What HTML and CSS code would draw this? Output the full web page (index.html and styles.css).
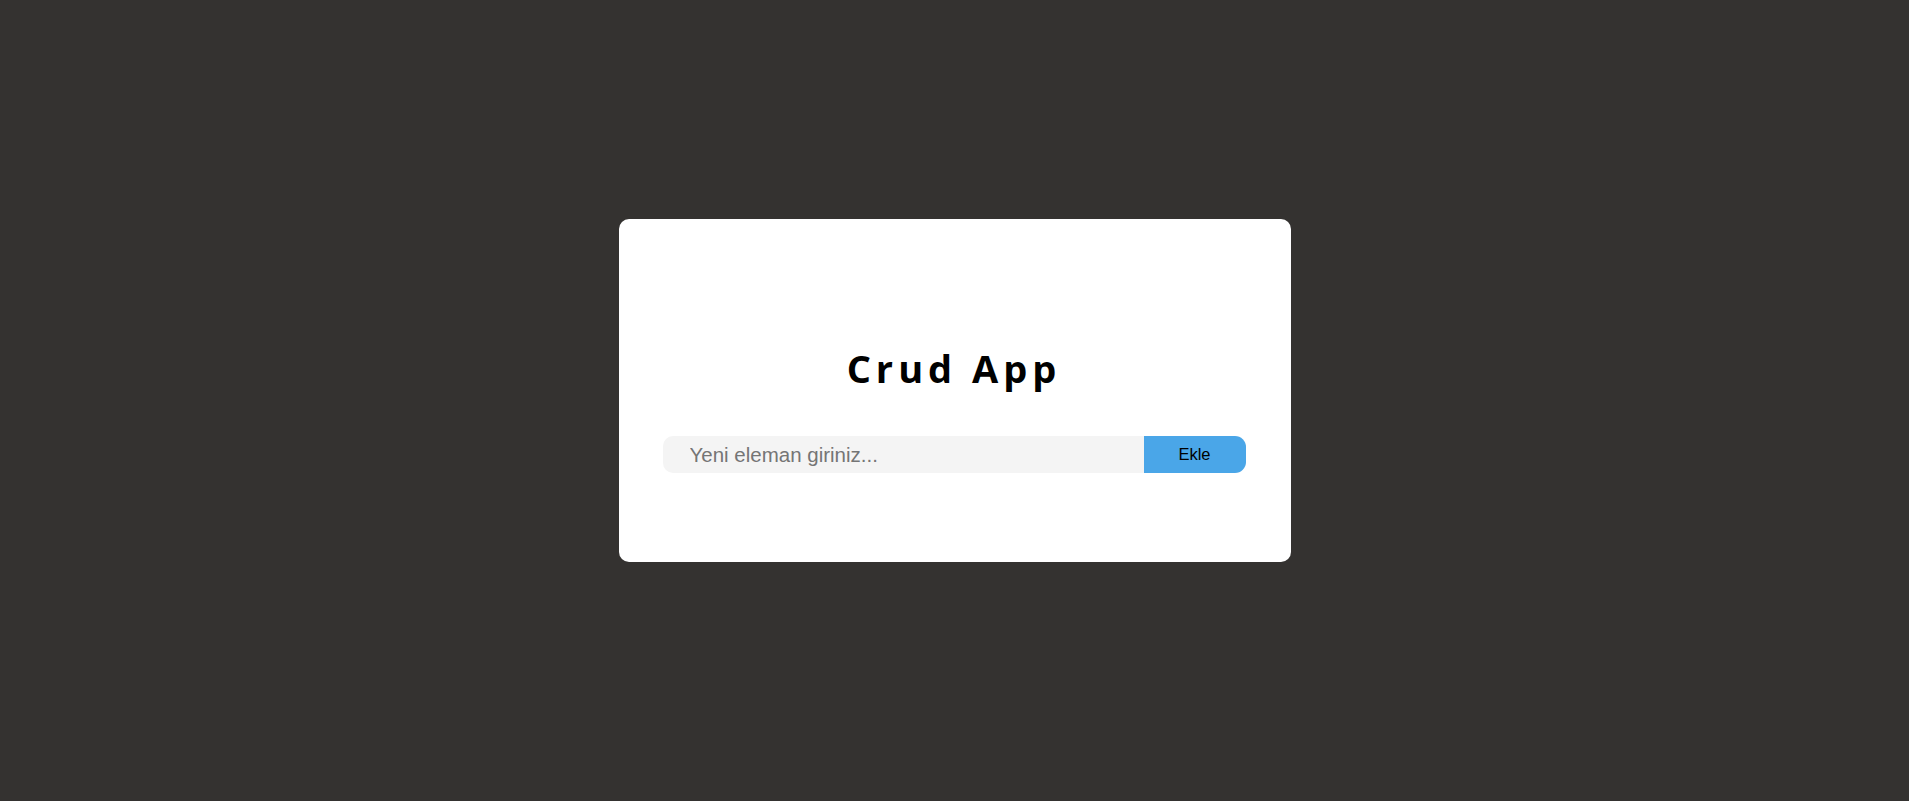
FILE: index.html
```html
<!DOCTYPE html>
<html lang="tr">
<head>
<meta charset="utf-8">
<title>Crud App</title>
<link rel="stylesheet" href="styles.css">
</head>
<body>
<main class="card">
  <h1 class="title">Crud App</h1>
  <form class="add-form">
    <input class="add-input" type="text" placeholder="Yeni eleman giriniz...">
    <button class="add-btn" type="button">Ekle</button>
  </form>
</main>
</body>
</html>
```
FILE: styles.css
```css
html, body {
  margin: 0;
  padding: 0;
}
body {
  background: #343230;
  min-height: 100vh;
  display: flex;
  justify-content: center;
  align-items: flex-start;
  font-family: "Liberation Sans", Arial, sans-serif;
}
.card {
  box-sizing: border-box;
  width: 672px;
  height: 343px;
  margin-top: 219px;
  background: #ffffff;
  border-radius: 10px;
  padding: 123px 45px 0 44px;
  display: flex;
  flex-direction: column;
}
.title {
  margin: 0;
  font-family: "Open Sans", sans-serif;
  font-weight: 700;
  font-size: 38px;
  line-height: 52px;
  letter-spacing: 5px;
  text-align: center;
  color: #000000;
}
.add-form {
  margin: 42px 0 0 0;
  display: flex;
  height: 37px;
}
.add-input {
  flex: 1;
  min-width: 0;
  border: none;
  outline: none;
  background: #f4f4f4;
  border-radius: 10px 0 0 10px;
  padding: 0 0 0 27px;
  font-family: "Liberation Sans", Arial, sans-serif;
  font-size: 20.5px;
  color: #333;
}
.add-input::placeholder {
  color: #757575;
}
.add-btn {
  width: 102px;
  border: none;
  background: #4aa6e8;
  border-radius: 0 11px 11px 0;
  font-family: "Liberation Sans", Arial, sans-serif;
  font-size: 16.5px;
  color: #000000;
  padding: 0;
  cursor: pointer;
}
```
